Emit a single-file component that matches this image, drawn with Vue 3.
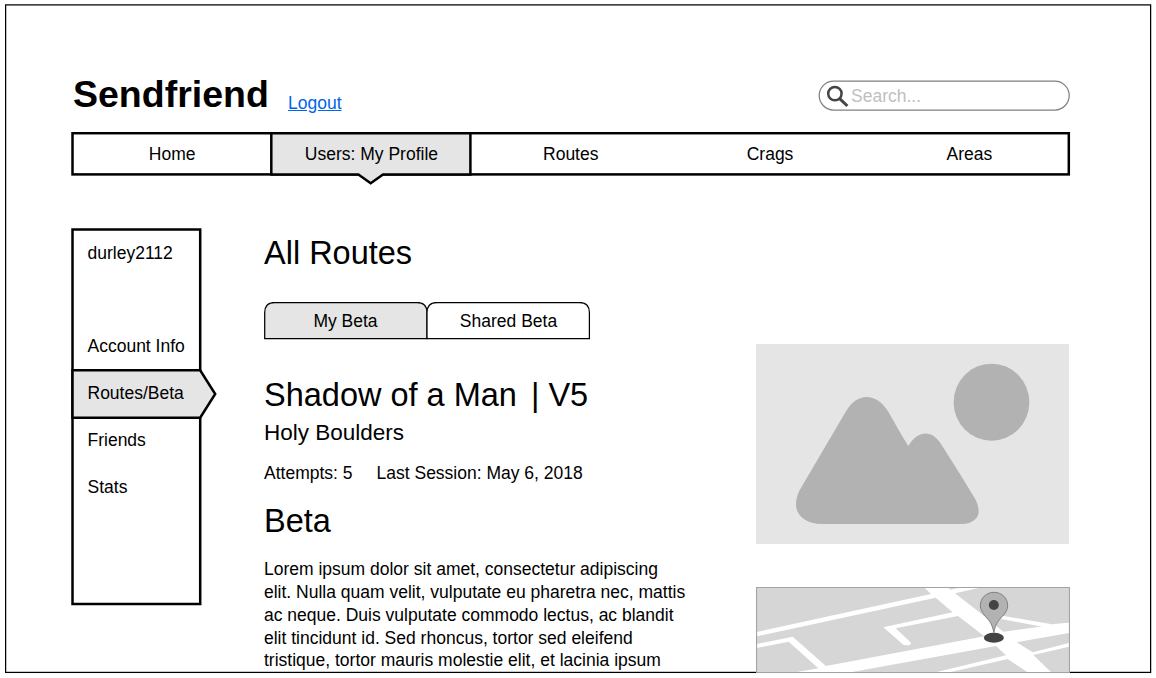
<script setup>
const navItems = [
  { label: 'Home' },
  { label: 'Users: My Profile', active: true },
  { label: 'Routes' },
  { label: 'Crags' },
  { label: 'Areas' },
]
const sideItems = ['Account Info', 'Routes/Beta', 'Friends', 'Stats']
</script>

<template>
  <div class="page">
    <svg class="frame" width="1156" height="678" fill="none" stroke="#000" stroke-width="1.25">
      <rect x="5.62" y="4.9" width="1145" height="667.5" />
    </svg>

    <header class="header">
      <h1 class="logo">Sendfriend</h1>
      <a class="logout">Logout</a>
      <div class="search">
        <svg class="outline" width="252" height="32" fill="none">
          <rect x="1.2" y="1.2" width="250" height="28.8" rx="14.4" stroke="#808080" stroke-width="1.25" />
          <circle cx="16.9" cy="13.6" r="6.7" stroke="#444" stroke-width="2.5" />
          <path d="M21.4 18.3L29.4 26" stroke="#444" stroke-width="3" />
        </svg>
        <span class="placeholder">Search...</span>
      </div>
    </header>

    <nav class="nav">
      <svg class="outline" width="1000" height="56" stroke="#000" stroke-width="2.5">
        <rect x="1.5" y="1.2" width="996.3" height="41.2" fill="#fff" />
        <path d="M200.3 1.2H399.4V42.4H312L299.7 51.2L287.4 42.4H200.3Z" fill="#e5e5e5" />
      </svg>
      <a v-for="item in navItems" :key="item.label" class="nav-item">{{ item.label }}</a>
    </nav>

    <div class="columns">
      <aside class="sidebar">
        <svg class="outline" width="150" height="380" stroke="#000" stroke-width="2.5">
          <rect x="1.5" y="1.5" width="127.7" height="374.5" fill="#fff" />
          <path d="M1.5 142.3H129.2L144.2 166L129.2 189.7H1.5Z" fill="#e5e5e5" />
        </svg>
        <div class="side-row user">durley2112</div>
        <a v-for="item in sideItems" :key="item" class="side-row">{{ item }}</a>
      </aside>

      <main class="main">
        <h2 class="title">All Routes</h2>
        <div class="tabs">
          <svg class="outline" width="328" height="40" stroke="#000" stroke-width="1.25">
            <path d="M.7 36.5V10.5Q.7 .5 10.7 .5H153Q163 .5 163 10.5V36.5Z" fill="#e5e5e5" />
            <path d="M163 36.5V10.5Q163 .5 173 .5H315.4Q325.4 .5 325.4 10.5V36.5Z" fill="#fff" />
          </svg>
          <span class="tab">My Beta</span>
          <span class="tab">Shared Beta</span>
        </div>
        <h2 class="title route"><span>Shadow of a Man</span><span>| V5</span></h2>
        <h3 class="crag">Holy Boulders</h3>
        <div class="meta"><span>Attempts: 5</span><span>Last Session: May 6, 2018</span></div>
        <h2 class="title">Beta</h2>
        <p class="text">
          Lorem ipsum dolor sit amet, consectetur adipiscing<br />
          elit. Nulla quam velit, vulputate eu pharetra nec, mattis<br />
          ac neque. Duis vulputate commodo lectus, ac blandit<br />
          elit tincidunt id. Sed rhoncus, tortor sed eleifend<br />
          tristique, tortor mauris molestie elit, et lacinia ipsum
        </p>
      </main>

      <section class="media">
        <svg class="photo" width="313" height="200" viewBox="48 42 939 600">
          <rect x="48" y="42" width="939" height="600" fill="#e5e5e5" />
          <ellipse cx="754.5" cy="216.5" rx="113.5" ry="115.5" fill="#b2b2b2" />
          <path
            d="M318 244C352 187 408 187 444 244C466 282 485 318 505 348C535 299 577 299 605 345C640 400 674 454 706 508C712 520 716 532 716 545C716 566 693 582 665 582H245C199 582 168 558 168 523C168 503 174 487 185 470Z"
            fill="#b2b2b2"
          />
        </svg>
        <svg class="map" width="314" height="86" viewBox="18 36 942 258">
          <rect x="18" y="36" width="942" height="270" fill="#d6d6d6" />
          <g fill="#fff">
            <path d="M20 171L543 57L521 36H594L601 44L636 36H700L615 55L686 110L760 170L957 143V174L800 202L848 232L957 204V215L850 240L906 294H836L773 252L590 294H548L768 241L738 213L310 290L305 294H125L205 280L116 200L20 219V207L128 185L228 273L703 184L624 123L437 160L483 203Q484 211 468 211Q462 211 458 208L400 157L608 112L557 68L20 184Z" />
            <path d="M750 121L905 148L957 143V158L880 156L750 131Z" />
          </g>
          <path d="M19.5 300V37.5H958.5V300" fill="none" stroke="#a3a3a3" stroke-width="3.5" />
          <path d="M18 292.5H960" stroke="#a3a3a3" stroke-width="3" />
          <ellipse cx="731.5" cy="188" rx="30" ry="15" fill="#444" />
          <path
            d="M731.5 173C727 143 713 132 703 120C696 111 691 103 691 92C691 69 709 52 732 52C755 52 773 69 773 92C773 103 768 111 761 120C750 132 736 143 731.5 173Z"
            fill="#b2b2b2" stroke="#808080" stroke-width="3"
          />
          <circle cx="731.5" cy="90" r="15" fill="#444" />
        </svg>
      </section>
    </div>
  </div>
</template>

<style>
body {
  margin: 0;
  background: #fff;
}
</style>

<style scoped>
.page {
  position: relative;
  box-sizing: border-box;
  width: 1156px;
  height: 678px;
  padding: 73px 86px 0 71px;
  overflow: hidden;
  font: 17.5px/20px "Liberation Sans", Arial, sans-serif;
  color: #000;
}
.frame,
.outline {
  position: absolute;
  top: 0;
  left: 0;
}
h1, h2, h3, p {
  margin: 0;
  font-weight: normal;
}
.header {
  display: flex;
  height: 59px;
}
.logo {
  margin-left: 2px;
  width: 215px;
  font-size: 37.5px;
  line-height: 42px;
  font-weight: bold;
}
.logout {
  margin-top: 20px;
  color: #0066e8;
  text-decoration: underline;
}
.search {
  position: relative;
  width: 252px;
  height: 32px;
  margin: 7px 0 0 auto;
}
.placeholder {
  position: relative;
  display: block;
  padding: 1px 0 0 33px;
  line-height: 30px;
  color: #bfbfbf;
}
.nav {
  position: relative;
  display: flex;
  height: 43px;
  padding: 1px 1px 0 1.5px;
}
.nav-item {
  position: relative;
  flex: 1;
  line-height: 42px;
  text-align: center;
}
.columns {
  display: flex;
  height: 445px;
  margin-top: 52px;
  position: relative;
}
.sidebar {
  position: relative;
  width: 193px;
  flex: none;
  padding-top: 2px;
}
.side-row {
  position: relative;
  display: block;
  height: 47px;
  padding-left: 16.5px;
  line-height: 46px;
}
.user {
  margin-bottom: 46px;
}
.main {
  flex: none;
  width: 492px;
  padding-top: 6px;
}
.title {
  font-size: 32.5px;
  line-height: 38px;
}
.tabs {
  position: relative;
  display: flex;
  width: 326px;
  height: 37px;
  margin-top: 30px;
}
.tab {
  position: relative;
  flex: 1;
  padding-top: 1px;
  line-height: 36px;
  text-align: center;
}
.route {
  display: flex;
  gap: 14px;
  margin-top: 37px;
}
.crag {
  margin-top: 6px;
  font-size: 22.5px;
  line-height: 26px;
}
.meta {
  display: flex;
  gap: 24px;
  margin: 17px 0 19px;
}
.text {
  margin-top: 18.3px;
  line-height: 22.8px;
  white-space: nowrap;
}
.media {
  display: flex;
  flex-direction: column;
  gap: 43px;
  padding-top: 116px;
}
</style>
